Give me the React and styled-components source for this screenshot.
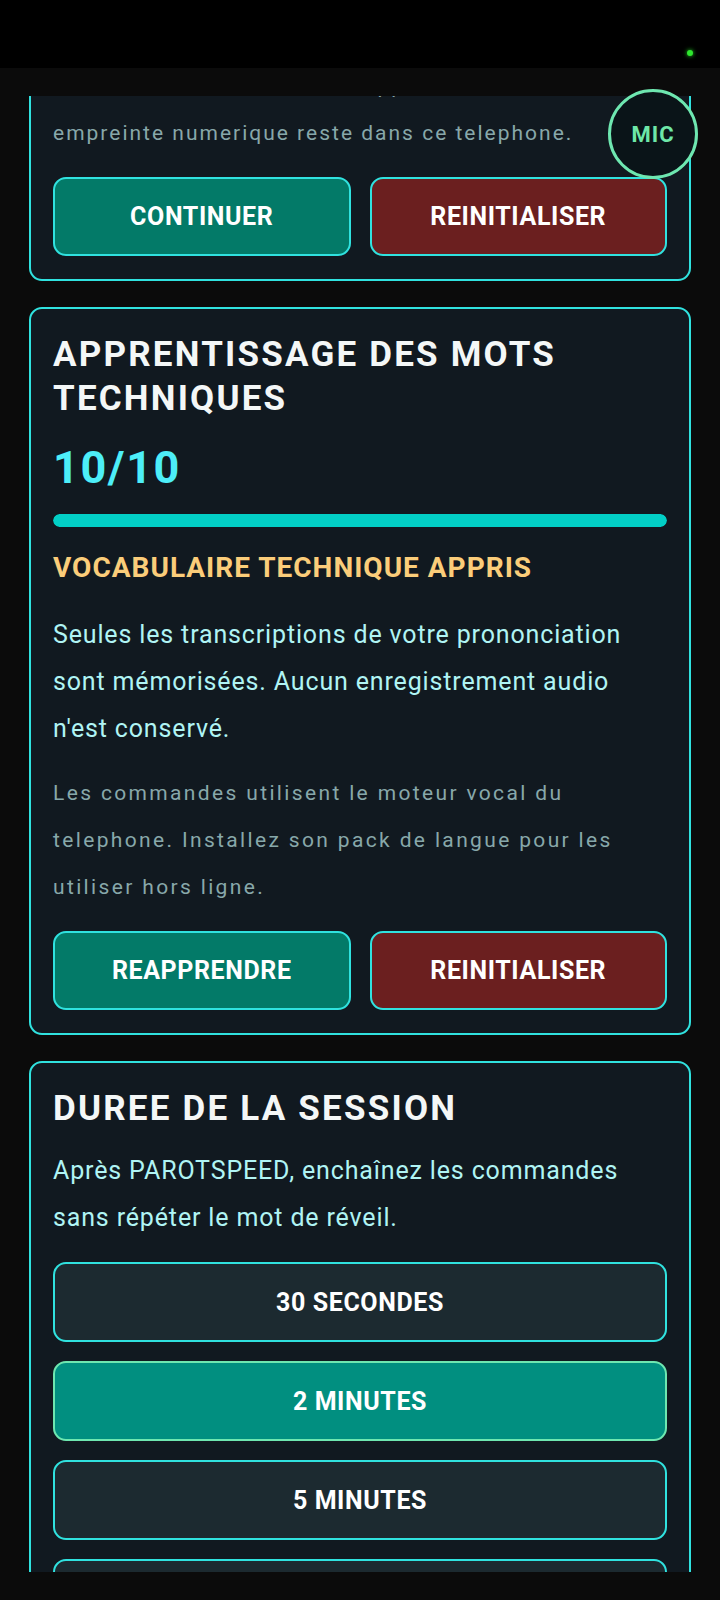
import React, { useLayoutEffect, useRef } from 'react';
import styled, { createGlobalStyle } from 'styled-components';

const GlobalStyle = createGlobalStyle`
  html, body {
    margin: 0;
    padding: 0;
    background: #0b0b0b;
  }
  body {
    font-family: Roboto, "Noto Sans", "Liberation Sans", sans-serif;
    -webkit-font-smoothing: antialiased;
  }
  * {
    box-sizing: border-box;
  }
`;

const Screen = styled.div`
  width: 720px;
  height: 1600px;
  background: #0b0b0b;
  overflow: hidden;
  display: flex;
  flex-direction: column;
`;

const StatusBar = styled.div`
  height: 68px;
  flex-shrink: 0;
  background: #000;
  display: flex;
  justify-content: flex-end;
  align-items: flex-start;
  padding: 50px 27px 0 0;
`;

const Dot = styled.span`
  width: 6px;
  height: 6px;
  border-radius: 50%;
  background: #2ee62e;
  box-shadow: 0 0 4px #22dd22;
`;

const Scroller = styled.div`
  position: relative;
  margin-top: 28px;
  height: 1476px;
  flex-shrink: 0;
  overflow-y: auto;
  scrollbar-width: none;
  padding: 0 29px 40px 29px;
  display: flex;
  flex-direction: column;
  gap: 26px;

  &::-webkit-scrollbar {
    display: none;
  }
`;

const Card = styled.section`
  flex-shrink: 0;
  background: #111920;
  border: 2px solid #30e2df;
  border-radius: 13px;
  padding: 24px 22px 23px;
  display: flex;
  flex-direction: column;
`;

const Title = styled.h2`
  margin: 0;
  color: #f4f7f7;
  font-size: 35px;
  line-height: 44px;
  font-weight: 700;
  letter-spacing: 2.2px;
`;

const Score = styled.div`
  margin-top: 20px;
  color: #4deef8;
  font-size: 45px;
  line-height: 54px;
  font-weight: 700;
  letter-spacing: 1.6px;
`;

const Track = styled.div`
  margin-top: 19px;
  height: 13px;
  border-radius: 7px;
  background: #0f2a2e;
  overflow: hidden;
`;

const Fill = styled.div`
  height: 100%;
  border-radius: 7px;
  background: #02cfc6;
`;

const Status = styled.div`
  margin-top: 23px;
  color: #fbcd7a;
  font-size: 28px;
  line-height: 36px;
  font-weight: 700;
  letter-spacing: 1px;
`;

const Lead = styled.p`
  margin: ${(p) => p.$top}px 0 0;
  color: #b0f4f4;
  font-size: 25px;
  line-height: 47px;
  letter-spacing: 0.85px;
`;

const Note = styled.p`
  margin: ${(p) => p.$top}px 0 0;
  color: #88a8aa;
  font-size: 21px;
  line-height: 47px;
  letter-spacing: ${(p) => (p.$tight ? '2px' : '2.35px')};
`;

const ButtonRow = styled.div`
  margin-top: 20px;
  display: grid;
  grid-template-columns: 1fr 1fr;
  gap: 19px;
`;

const ActionButton = styled.button`
  height: 79px;
  border: 2px solid #30e2df;
  border-radius: 13px;
  background: ${(p) => (p.$danger ? '#6b1f1f' : '#037a68')};
  color: #fff;
  font-family: inherit;
  font-size: 25px;
  font-weight: 700;
  letter-spacing: 0.6px;
  cursor: pointer;
`;

const Options = styled.div`
  margin-top: 21px;
  display: flex;
  flex-direction: column;
  gap: 19px;
`;

const OptionButton = styled.button`
  height: 80px;
  border: 2px solid ${(p) => (p.$active ? '#6ee7b0' : '#30e2df')};
  border-radius: 13px;
  background: ${(p) => (p.$active ? '#018f80' : '#1c2a30')};
  color: #fff;
  font-family: inherit;
  font-size: 25px;
  font-weight: 700;
  letter-spacing: 0.6px;
  cursor: pointer;
`;

const MicButton = styled.button`
  position: fixed;
  top: 89px;
  left: 608px;
  width: 90px;
  height: 90px;
  border-radius: 50%;
  border: 3px solid #6ee7b0;
  background: #0a1418;
  color: #6ee7a8;
  font-family: inherit;
  font-size: 22px;
  font-weight: 700;
  letter-spacing: 1px;
  display: flex;
  align-items: center;
  justify-content: center;
  padding: 0;
  cursor: pointer;
`;

const durations = ['30 SECONDES', '2 MINUTES', '5 MINUTES', '10 MINUTES'];

export default function App() {
  const scrollRef = useRef(null);
  const wordsRef = useRef(null);
  const learned = 10;
  const total = 10;

  useLayoutEffect(() => {
    // the screenshot is taken part way down the settings list
    if (scrollRef.current && wordsRef.current) {
      scrollRef.current.scrollTop = wordsRef.current.offsetTop - 211;
    }
  }, []);

  return (
    <>
      <GlobalStyle />
      <Screen>
        <StatusBar>
          <Dot />
        </StatusBar>
        <Scroller ref={scrollRef}>
          <Card>
            <Title>EMPREINTE VOCALE</Title>
            <Status>VOIX ENREGISTREE</Status>
            <Lead $top={24}>Votre voix sert uniquement a reconnaitre le mot de reveil.</Lead>
            <Note $top={18} $tight>
              Aucune donnee ne sort de l'appareil et votre
              empreinte numerique reste dans ce telephone.
            </Note>
            <ButtonRow>
              <ActionButton>CONTINUER</ActionButton>
              <ActionButton $danger>REINITIALISER</ActionButton>
            </ButtonRow>
          </Card>

          <Card ref={wordsRef}>
            <Title>APPRENTISSAGE DES MOTS TECHNIQUES</Title>
            <Score>{learned}/{total}</Score>
            <Track>
              <Fill style={{ width: `${(learned / total) * 100}%` }} />
            </Track>
            <Status>VOCABULAIRE TECHNIQUE APPRIS</Status>
            <Lead $top={25}>
              Seules les transcriptions de votre prononciation sont mémorisées. Aucun
              enregistrement audio n'est conservé.
            </Lead>
            <Note $top={18}>
              Les commandes utilisent le moteur vocal du telephone. Installez son pack de
              langue pour les utiliser hors ligne.
            </Note>
            <ButtonRow>
              <ActionButton>REAPPRENDRE</ActionButton>
              <ActionButton $danger>REINITIALISER</ActionButton>
            </ButtonRow>
          </Card>

          <Card>
            <Title>DUREE DE LA SESSION</Title>
            <Lead $top={16}>
              Après PAROTSPEED, enchaînez les commandes sans répéter le mot de réveil.
            </Lead>
            <Options>
              {durations.map((d) => (
                <OptionButton key={d} $active={d === '2 MINUTES'}>
                  {d}
                </OptionButton>
              ))}
            </Options>
          </Card>
        </Scroller>
        <MicButton>MIC</MicButton>
      </Screen>
    </>
  );
}
